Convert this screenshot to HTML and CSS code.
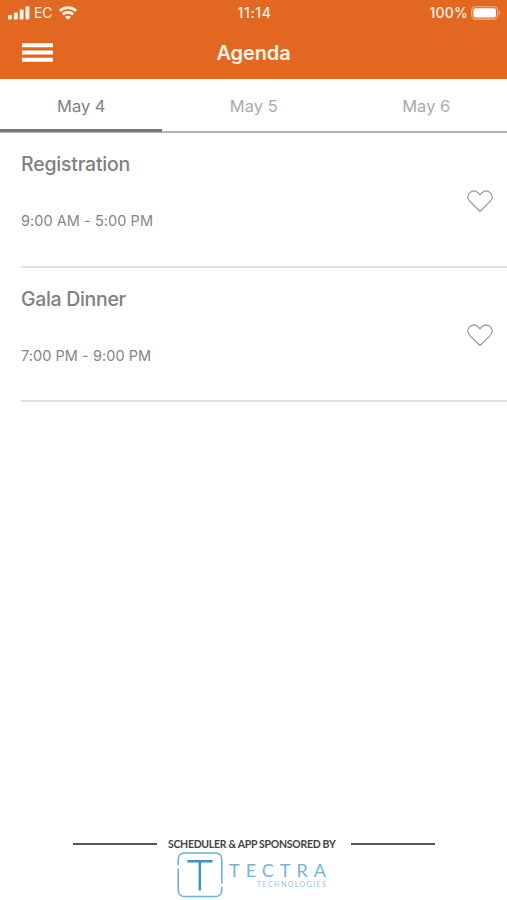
FILE: index.html
```
<!DOCTYPE html>
<html lang="en">
<head>
<meta charset="utf-8">
<title>Agenda</title>
<link rel="stylesheet" href="styles.css">
</head>
<body>
<div class="app">
  <header class="header">
    <div class="status">
      <div class="status-left">
        <svg class="signal" width="22" height="14" viewBox="0 0 22 14" fill="currentColor"><rect x="0" y="9" width="3.9" height="4.6" rx="1"/><rect x="5.9" y="6.6" width="3.9" height="7" rx="1"/><rect x="11.7" y="3.4" width="3.9" height="10.2" rx="1"/><rect x="17.5" y="0.2" width="3.9" height="13.4" rx="1"/></svg>
        <span class="carrier">EC</span>
        <svg class="wifi" width="18" height="14" viewBox="0 0 18 14" fill="none" stroke="currentColor" stroke-width="2.7"><path d="M.9 5C5.3.6 12.7.6 17.1 5"/><path d="M3.8 8.4c2.9-2.8 7.5-2.8 10.4 0"/><path d="M6 10.9c1.7-1.5 4.3-1.5 6 0l-3 2.9z" fill="currentColor" stroke="none"/></svg>
      </div>
      <span class="clock">11:14</span>
      <div class="status-right">
        <span class="percent">100%</span>
        <svg width="30" height="14" viewBox="0 0 30 14"><rect x=".8" y=".7" width="25.8" height="12.4" rx="3.6" fill="none" stroke="#f3b28a" stroke-width="1.1"/><rect x="2.4" y="2.2" width="22.6" height="9.4" rx="2" fill="#fff"/><path d="M28 4.8c1.6.6 1.6 3.6 0 4.2z" fill="#f3b28a"/></svg>
      </div>
    </div>
    <div class="navbar">
      <svg class="menu" width="31" height="20" viewBox="0 0 31 20" fill="#fff"><rect y=".2" width="31" height="4" rx=".5"/><rect y="7.4" width="31" height="4" rx=".5"/><rect y="14.7" width="31" height="4" rx=".5"/></svg>
      <h1 class="title">Agenda</h1>
    </div>
  </header>
  <nav class="tabs">
    <div class="tab active">May 4</div>
    <div class="tab">May 5</div>
    <div class="tab">May 6</div>
  </nav>
  <main class="list">
    <section class="event">
      <div><h2 class="name">Registration</h2><p class="time">9:00 AM - 5:00 PM</p></div>
      <svg class="heart" width="26" height="23" viewBox="0 0 26 23"><path d="M13 21.5 2.5 11.2C.1 8.6.4 4.9 2.8 2.6 5.3.5 8.6.5 10.8 2.6L13 4.7l2.2-2.1c2.2-2.1 5.5-2.1 8 0 2.4 2.3 2.7 6 .3 8.6z"/></svg>
    </section>
    <section class="event">
      <div><h2 class="name gala">Gala Dinner</h2><p class="time">7:00 PM - 9:00 PM</p></div>
      <svg class="heart" width="26" height="23" viewBox="0 0 26 23"><path d="M13 21.5 2.5 11.2C.1 8.6.4 4.9 2.8 2.6 5.3.5 8.6.5 10.8 2.6L13 4.7l2.2-2.1c2.2-2.1 5.5-2.1 8 0 2.4 2.3 2.7 6 .3 8.6z"/></svg>
    </section>
  </main>
  <footer class="sponsor">
    <div class="sponsor-line"><span class="rule"></span><span class="credit">SCHEDULER &amp; APP SPONSORED BY</span><span class="rule"></span></div>
    <div class="brand">
      <svg width="46" height="46" viewBox="0 0 46 46" fill="none"><path d="M1.2 13V7a6 6 0 0 1 6-6h31.6a6 6 0 0 1 6 6v24.5M44.8 35v3.5a6 6 0 0 1-6 6H7.2a6 6 0 0 1-6-6V16.5" stroke="#6aafd9" stroke-width="1.5"/><path d="M10.3 9.2h25.2M22.8 9.2v29.3" stroke="#3b91c9" stroke-width="2.4"/></svg>
      <div class="wordmark"><span class="brand-name">TECTRA</span><span class="brand-sub">TECHNOLOGIES</span></div>
    </div>
  </footer>
</div>
</body>
</html>
```

FILE: styles.css
```
* { box-sizing: border-box; }
body { margin: 0; background: #fff; font-family: Inter, "Liberation Sans", sans-serif; }
h1, h2, p { margin: 0; }
svg { display: block; flex: none; }
.app { width: 507px; height: 900px; display: flex; flex-direction: column; overflow: hidden; }
.header { height: 79px; background: #e26822; color: #fff4e9; flex: none; }
.status { height: 26px; display: grid; grid-template-columns: 1fr auto 1fr; align-items: center; padding: 0 6px 0 8px; font-size: 13.5px; line-height: 16px; }
.status-left, .status-right { display: flex; align-items: center; }
.carrier { margin: 0 6px 0 4px; font-size: 14px; width: 19px; letter-spacing: -0.2px; }
.clock { font-weight: 500; font-size: 14px; letter-spacing: 0.6px; }
.status-right { justify-content: flex-end; gap: 3px; }
.percent { font-weight: 500; font-size: 14px; letter-spacing: 0.2px; }
.navbar { height: 53px; display: grid; grid-template-columns: 1fr auto 1fr; align-items: center; padding: 0 22px; }
.title { font-size: 20px; font-weight: 600; line-height: 24px; letter-spacing: -0.1px; }
.tabs { height: 54px; flex: none; display: grid; grid-template-columns: repeat(3, 161.5px); gap: 11px; border-bottom: 2px solid #b3b3b3; }
.tab { height: 52px; padding-left: 1px; text-align: center; font-size: 16.5px; line-height: 54px; color: #ababab; letter-spacing: 0; }
.tab.active { color: #7f7f7f; height: 53px; border-bottom: 3px solid #757575; }
.list { flex: 1; padding-left: 21px; }
.event { height: 134.5px; border-bottom: 2px solid #e0e0e0; padding: 19px 14px 0 0; display: flex; justify-content: space-between; }
.name { color: #808080; font-size: 19.5px; font-weight: 500; line-height: 24px; letter-spacing: -0.2px; }
.gala { letter-spacing: -0.32px; }
.time { color: #868686; font-size: 14.5px; line-height: 18px; margin-top: 36px; letter-spacing: 0.05px; }
.heart { margin-top: 37.5px; fill: none; stroke: #969696; stroke-width: 1.2; }
.sponsor { height: 64px; flex: none; }
.sponsor-line { display: flex; align-items: center; justify-content: space-between; height: 16px; width: 362px; margin-left: 73px; }
.rule { width: 84px; height: 2px; background: #555; }
.credit { font-family: Lato, sans-serif; font-weight: 700; font-size: 10.5px; line-height: 14px; color: #444; width: 172px; white-space: nowrap; letter-spacing: -0.29px; }
.brand { display: flex; margin-left: 177px; gap: 6px; }
.wordmark { width: 105px; padding-top: 8px; display: flex; flex-direction: column; color: #74b3db; font-family: Lato, sans-serif; }
.brand-name { font-size: 18px; line-height: 20px; letter-spacing: 6px; }
.brand-sub { font-size: 7px; line-height: 8px; letter-spacing: 1.45px; margin: 0 0 0 28px; color: #91c4e4; }
```
